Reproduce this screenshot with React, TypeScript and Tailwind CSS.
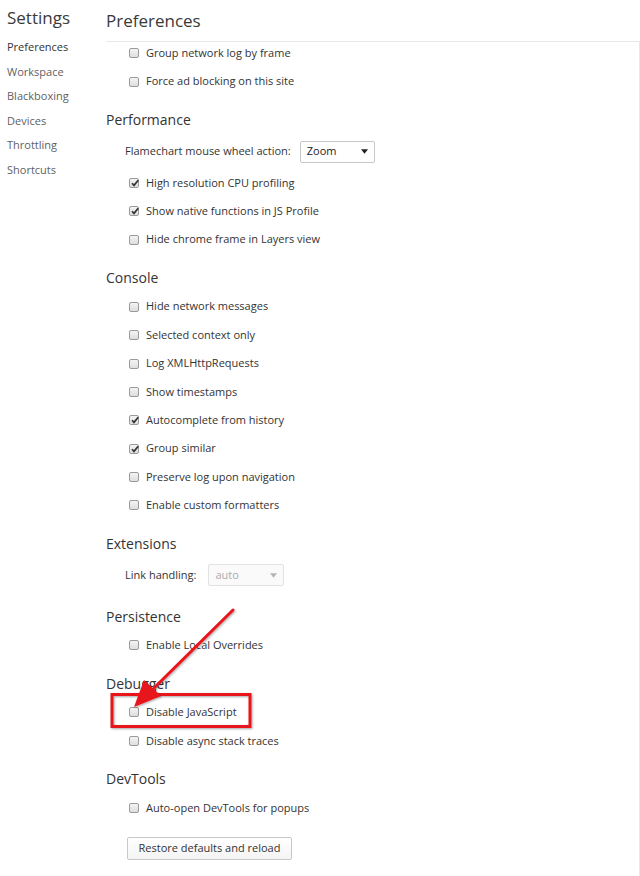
import type { ReactNode } from "react";

const SIDEBAR = ["Preferences", "Workspace", "Blackboxing", "Devices", "Throttling", "Shortcuts"];

function Checkbox({ checked }: { checked?: boolean }) {
  return (
    <span className="relative inline-flex h-[10px] w-[10px] shrink-0 items-center justify-center rounded-[2px] border border-[#9a9a9a] bg-gradient-to-b from-[#f4f4f4] to-[#dedede]">
      {checked ? (
        <svg viewBox="0 0 10 10" className="absolute left-[0px] top-[-1px] h-[10px] w-[10px]">
          <path d="M2 5.2 L4 7.4 L8.2 2.2" fill="none" stroke="#333" strokeWidth="1.7" />
        </svg>
      ) : null}
    </span>
  );
}

function Row({ label, checked }: { label: string; checked?: boolean }) {
  return (
    <div className="flex h-[28.4px] items-center pl-[23px]">
      <Checkbox checked={checked} />
      <span className="ml-[7px]">{label}</span>
    </div>
  );
}

function Heading({ children }: { children: ReactNode }) {
  return <div className="flex h-[29.6px] items-center text-[14px] text-[#333]">{children}</div>;
}

function Section({ title, children }: { title: string; children: ReactNode }) {
  return (
    <div className="mt-[9px]">
      <Heading>{title}</Heading>
      {children}
    </div>
  );
}

function Select({ value, disabled, width }: { value: string; disabled?: boolean; width: string }) {
  return (
    <div
      className={`flex h-[22px] items-center justify-between rounded-[2px] border pl-[6px] pr-[6px] ${width} ${
        disabled ? "border-[#e2e2e2] bg-[#fafafa] text-[#aaa]" : "border-[#c8c8c8] bg-white text-[#222]"
      }`}
    >
      <span>{value}</span>
      <svg viewBox="0 0 8 5" className="h-[5px] w-[7px]">
        <path d="M0 0 L8 0 L4 5 Z" fill={disabled ? "#b5b5b5" : "#222"} />
      </svg>
    </div>
  );
}

export default function App() {
  return (
    <div className="relative flex h-[876px] w-[640px] overflow-hidden bg-white font-['Open_Sans',sans-serif] text-[11px] text-[#333]">
      <div className="w-[106px] shrink-0 pl-[7px]">
        <div className="flex h-[35px] items-center text-[17px] text-[#3a3a3a]">Settings</div>
        {SIDEBAR.map((item, i) => (
          <div
            key={item}
            className={`flex h-[24.6px] items-center text-[11px] ${i === 0 ? "text-[#333]" : "text-[#5f5f5f]"}`}
          >
            {item}
          </div>
        ))}
      </div>

      <div className="flex min-w-0 flex-1 flex-col">
        <div className="flex h-[41px] shrink-0 items-center text-[17px] text-[#3a3a3a]">Preferences</div>
        <div className="flex-1 overflow-hidden border-r border-t border-[#e8e8e8]">
          <div className="-mt-[3px]">
            <Row label="Group network log by frame" />
            <Row label="Force ad blocking on this site" />

            <Section title="Performance">
              <div className="flex h-[34.4px] items-center pl-[19px]">
                <span className="mr-[9px]">Flamechart mouse wheel action:</span>
                <Select value="Zoom" width="w-[75px]" />
              </div>
              <Row label="High resolution CPU profiling" checked />
              <Row label="Show native functions in JS Profile" checked />
              <Row label="Hide chrome frame in Layers view" />
            </Section>

            <Section title="Console">
              <Row label="Hide network messages" />
              <Row label="Selected context only" />
              <Row label="Log XMLHttpRequests" />
              <Row label="Show timestamps" />
              <Row label="Autocomplete from history" checked />
              <Row label="Group similar" checked />
              <Row label="Preserve log upon navigation" />
              <Row label="Enable custom formatters" />
            </Section>

            <Section title="Extensions">
              <div className="flex h-[34.4px] items-center pl-[19px]">
                <span className="mr-[12px]">Link handling:</span>
                <Select value="auto" width="w-[76px]" disabled />
              </div>
            </Section>

            <Section title="Persistence">
              <Row label="Enable Local Overrides" />
            </Section>

            <Section title="Debugger">
              <Row label="Disable JavaScript" />
              <Row label="Disable async stack traces" />
            </Section>

            <Section title="DevTools">
              <Row label="Auto-open DevTools for popups" />
            </Section>

            <div className="mt-[15px] pl-[21px]">
              <button
                type="button"
                className="h-[23px] w-[165px] rounded-[2px] border border-[#c8c8c8] bg-gradient-to-b from-white to-[#f4f4f4] text-[11px] text-[#333]"
              >
                Restore defaults and reload
              </button>
            </div>
          </div>
        </div>
      </div>

      <svg className="pointer-events-none absolute left-0 top-0 h-[876px] w-[640px]" viewBox="0 0 640 876">
        <defs>
          <filter id="shadow" x="-20%" y="-20%" width="140%" height="140%">
            <feDropShadow dx="1" dy="1" stdDeviation="1" floodColor="#000" floodOpacity="0.35" />
          </filter>
        </defs>
        <rect x="112" y="694.5" width="138" height="32" fill="none" stroke="#e8141a" strokeWidth="3" filter="url(#shadow)" />
        <g filter="url(#shadow)">
          <line x1="233" y1="610" x2="154" y2="688" stroke="#e8141a" strokeWidth="3" strokeLinecap="round" />
          <path d="M134 707 L144 680 L161 696 Z" fill="#e8141a" />
        </g>
      </svg>
    </div>
  );
}
